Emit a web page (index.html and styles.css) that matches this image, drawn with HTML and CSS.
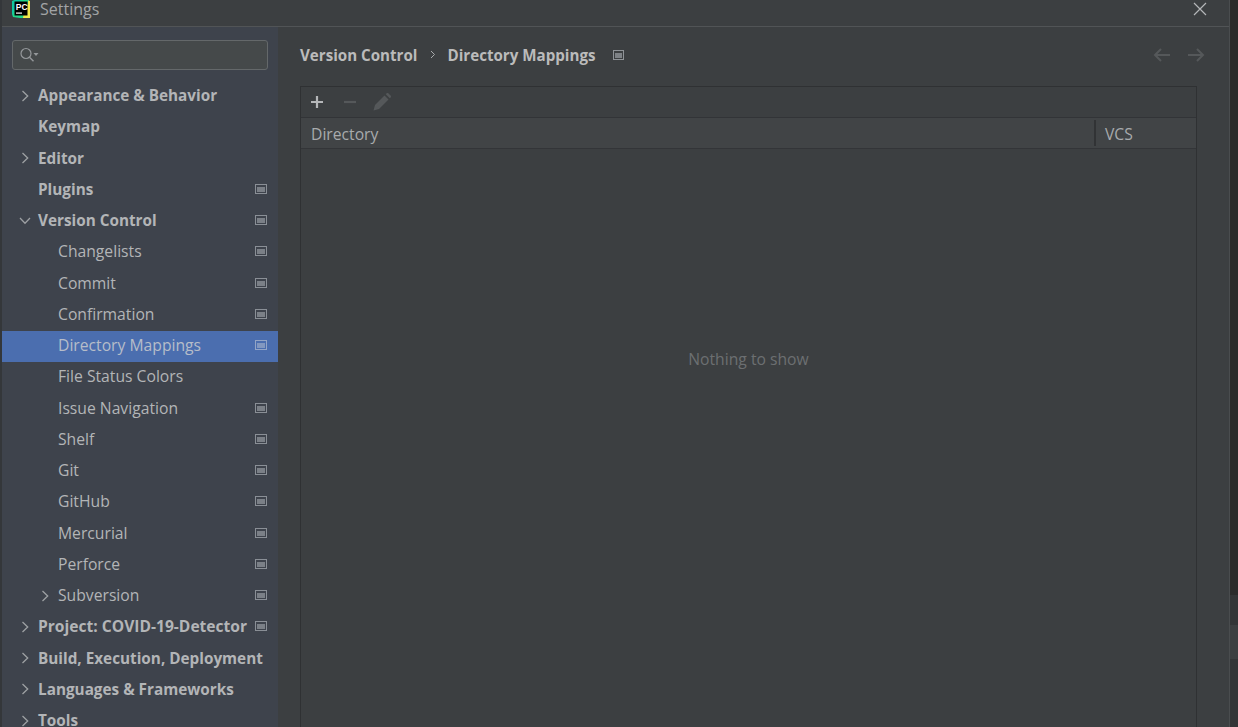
FILE: index.html
```html
<!DOCTYPE html>
<html lang="en">
<head>
<meta charset="utf-8">
<title>Settings</title>
<link rel="stylesheet" href="styles.css">
</head>
<body>
<svg class="defs" width="0" height="0" aria-hidden="true">
  <symbol id="proj" viewBox="0 0 12 10"><path d="M0 0h12v10H0z" fill="#8a8f96"/><path d="M1 1h10v8H1z" fill="#3e434c"/><path d="M2 3h8v5H2z" fill="#7b8087"/></symbol>
  <symbol id="chev" viewBox="0 0 10 14"><path d="M2.5 2l5.2 5-5.2 5" fill="none" stroke="#9da0a3" stroke-width="1.3"/></symbol>
</svg>
<div class="window">
  <header class="titlebar">
    <svg class="logo" width="20" height="20" viewBox="0 0 20 20">
      <path d="M1 2l8-2 9 1 1 9 0 9-10 0-7-1z" fill="#21d789"/>
      <path d="M1 2l7-2 3 3-7 6-2 6-1 3z" fill="#10c8a0"/>
      <path d="M15 1l4 1 0 17-7 0z" fill="#f2e84a"/>
      <path d="M12 0l5 1 0 5-4 0z" fill="#21d789"/>
      <path d="M3.5 2.5h13v14h-13z" fill="#000"/>
      <text x="4.8" y="10.5" class="logo-text">PC</text>
      <path d="M5 13.5h6v1.2H5z" fill="#fff"/>
    </svg>
    <span class="title">Settings</span>
    <svg class="close" width="14" height="14" viewBox="0 0 14 14"><path d="M1 1l12 12M13 1L1 13" stroke="#b4b6b8" stroke-width="1.2" fill="none"/></svg>
  </header>
  <div class="content">
    <nav class="sidebar">
      <div class="search">
        <svg width="20" height="16" viewBox="0 0 20 16"><circle cx="7" cy="6.5" r="5" fill="none" stroke="#95989b" stroke-width="1.2"/><path d="M10.5 10.2l4 4" stroke="#95989b" stroke-width="1.4"/><path d="M14.5 6h5l-2.5 3z" fill="#95989b"/></svg>
      </div>
      <ul class="tree">
        <li class="row top"><svg class="chev"><use href="#chev"/></svg><span>Appearance &amp; Behavior</span></li>
        <li class="row top"><span>Keymap</span></li>
        <li class="row top"><svg class="chev"><use href="#chev"/></svg><span>Editor</span></li>
        <li class="row top"><span>Plugins</span><svg class="pi"><use href="#proj"/></svg></li>
        <li class="row top"><svg class="chev down" viewBox="0 0 14 10"><path d="M2 2l5 5.2L12 2" fill="none" stroke="#9da0a3" stroke-width="1.3"/></svg><span>Version Control</span><svg class="pi"><use href="#proj"/></svg></li>
        <li class="row sub"><span>Changelists</span><svg class="pi"><use href="#proj"/></svg></li>
        <li class="row sub"><span>Commit</span><svg class="pi"><use href="#proj"/></svg></li>
        <li class="row sub"><span>Confirmation</span><svg class="pi"><use href="#proj"/></svg></li>
        <li class="row sub selected"><span>Directory Mappings</span><svg class="pi" viewBox="0 0 12 10"><path d="M0 0h12v10H0z" fill="#93a5c6"/><path d="M1 1h10v8H1z" fill="#4b6eaf"/><path d="M2 3h8v5H2z" fill="#8298c0"/></svg></li>
        <li class="row sub"><span>File Status Colors</span></li>
        <li class="row sub"><span>Issue Navigation</span><svg class="pi"><use href="#proj"/></svg></li>
        <li class="row sub"><span>Shelf</span><svg class="pi"><use href="#proj"/></svg></li>
        <li class="row sub"><span>Git</span><svg class="pi"><use href="#proj"/></svg></li>
        <li class="row sub"><span>GitHub</span><svg class="pi"><use href="#proj"/></svg></li>
        <li class="row sub"><span>Mercurial</span><svg class="pi"><use href="#proj"/></svg></li>
        <li class="row sub"><span>Perforce</span><svg class="pi"><use href="#proj"/></svg></li>
        <li class="row sub"><svg class="chev"><use href="#chev"/></svg><span>Subversion</span><svg class="pi"><use href="#proj"/></svg></li>
        <li class="row top project"><svg class="chev"><use href="#chev"/></svg><span>Project: COVID-19-Detector</span><svg class="pi"><use href="#proj"/></svg></li>
        <li class="row top"><svg class="chev"><use href="#chev"/></svg><span>Build, Execution, Deployment</span></li>
        <li class="row top"><svg class="chev"><use href="#chev"/></svg><span>Languages &amp; Frameworks</span></li>
        <li class="row top"><svg class="chev"><use href="#chev"/></svg><span>Tools</span></li>
      </ul>
    </nav>
    <main class="main">
      <div class="crumbs">
        <span class="crumb">Version Control</span>
        <svg class="crumb-sep" width="6" height="9" viewBox="0 0 6 9"><path d="M1 1l3.5 3.5L1 8" fill="none" stroke="#a9abad" stroke-width="1"/></svg>
        <span class="crumb">Directory Mappings</span>
        <svg class="pi crumb-pi" viewBox="0 0 11 10"><path d="M0 0h11v10H0z" fill="#8f9397"/><path d="M1 1h9v8H1z" fill="#3c3f41"/><path d="M2 3h7v5H2z" fill="#7e8286"/></svg>
        <div class="nav-arrows">
          <svg width="18" height="14" viewBox="0 0 18 14"><path d="M17 7H2M8 1L2 7l6 6" fill="none" stroke="#55585a" stroke-width="2"/></svg>
          <svg width="18" height="14" viewBox="0 0 18 14"><path d="M1 7h15M10 1l6 6-6 6" fill="none" stroke="#55585a" stroke-width="2"/></svg>
        </div>
      </div>
      <section class="panel">
        <div class="toolbar">
          <svg width="14" height="14" viewBox="0 0 14 14"><path d="M7 1v12M1 7h12" stroke="#b5b7b9" stroke-width="2.2"/></svg>
          <svg width="14" height="14" viewBox="0 0 14 14"><path d="M1 7h12" stroke="#55585a" stroke-width="2.2"/></svg>
          <svg class="pencil" width="18" height="18" viewBox="0 0 18 18"><path d="M0.5 17.5l1.5-5.5L11.5 2.500l4 4L6 16z" fill="#55585a"/><path d="M12.800 1.200l1-1q.7-.5 1.400 0l2.600 2.600q.5.700 0 1.400l-1 1z" fill="#55585a"/></svg>
        </div>
        <div class="thead">
          <div class="th th-dir">Directory</div>
          <div class="th th-vcs">VCS</div>
        </div>
        <div class="tbody">Nothing to show</div>
      </section>
    </main>
  </div>
</div>
<aside class="edge">
  <div class="edge-a"></div>
  <div class="edge-b"></div>
  <div class="edge-c"></div>
  <div class="edge-d"></div>
</aside>
</body>
</html>
```
FILE: styles.css
```css
* { box-sizing: border-box; }
html, body { margin: 0; height: 100%; }
body {
  display: flex;
  height: 727px;
  overflow: hidden;
  background: #3c3f41;
  font-family: "Open Sans", "Noto Sans", sans-serif;
  font-size: 15.7px;
  color: #bbbbbb;
}
.defs { position: absolute; }
.window {
  width: 1230px;
  height: 727px;
  flex: none;
  display: flex;
  flex-direction: column;
  border-left: 2px solid #34373a;
  border-right: 1px solid #4a4d4f;
  overflow: hidden;
}
.titlebar {
  height: 27px;
  flex: none;
  display: flex;
  align-items: center;
  padding: 0 22px 8px 9px;
  border-bottom: 1px solid #515456;
  background: #3c3f41;
}
.logo { flex: none; }
.logo-text { font: 700 8.500px "Liberation Sans", sans-serif; fill: #fff; }
.title { margin-left: 9px; color: #a2a4a6; font-size: 16px; }
.close { margin-left: auto; }
.content { flex: 1; display: flex; min-height: 0; }
.sidebar {
  width: 276px;
  flex: none;
  background: #3e434c;
  padding-top: 13px;
}
.search {
  margin-left: 10px;
  width: 256px;
  height: 30px;
  border: 1px solid #64686a;
  border-radius: 3px;
  background: #45494a;
  display: flex;
  align-items: center;
  padding-left: 6px;
}
.tree { list-style: none; margin: 10.6px 0 0; padding: 0; }
.row {
  height: 31.25px;
  display: flex;
  align-items: center;
  padding-bottom: 2px;
  position: relative;
  white-space: nowrap;
  color: #b3b5b7;
}
.row.top { padding-left: 36px; font-weight: 700; font-size: 15.3px; }
.row.top.project { font-size: 15.6px; }
.row.sub { padding-left: 56px; }
.row.selected { background: #4b6eaf; color: #b6bdc9; }
.chev {
  position: absolute;
  width: 10px;
  height: 14px;
  left: 18px;
  top: 8px;
}
.chev.down { width: 14px; height: 10px; left: 16px; top: 10px; }
.row.sub .chev { left: 38px; }
.pi { width: 12px; height: 10px; flex: none; margin-left: auto; margin-right: 11px; }
.main { flex: 1; padding: 0 32px 0 22px; min-width: 0; }
.crumbs {
  height: 59px;
  display: flex;
  align-items: center;
  padding-bottom: 4px;
  font-weight: 700;
  font-size: 15.150px;
  color: #bbbbbb;
  margin-right: -8px;
}
.crumb-sep { margin: 0 11px 0 13px; }
.crumb-pi { margin: 0 0 0 17px; width: 11px; }
.nav-arrows { margin-left: auto; display: flex; gap: 16px; }
.panel {
  height: 700px;
  border: 1px solid #2f3133;
  width: 897px;
  display: flex;
  flex-direction: column;
}
.toolbar {
  height: 31px;
  flex: none;
  display: flex;
  align-items: center;
  gap: 19px;
  padding-left: 9px;
  border-bottom: 1px solid #323437;
}
.pencil { margin-left: -3px; }
.thead {
  height: 31px;
  flex: none;
  display: flex;
  background: #414446;
  border-bottom: 1px solid #333538;
  align-items: center;
  color: #a8abad;
}
.th-dir { flex: 1; padding: 2px 0 0 10px; }
.th-vcs {
  width: 102px;
  height: 26px;
  line-height: 28px;
  padding-left: 9px;
  border-left: 2px solid #313335;
}
.tbody {
  flex: 1;
  padding-top: 199px;
  text-align: center;
  color: #6c6f71;
}
.edge { width: 8px; flex: none; display: flex; flex-direction: column; height: 727px; }
.edge-a { height: 595px; background: #2b2b2b; }
.edge-b { height: 30px; background: #333537; }
.edge-c { height: 34px; background: #3c3f41; }
.edge-d { flex: 1; background: #333537; }
```
